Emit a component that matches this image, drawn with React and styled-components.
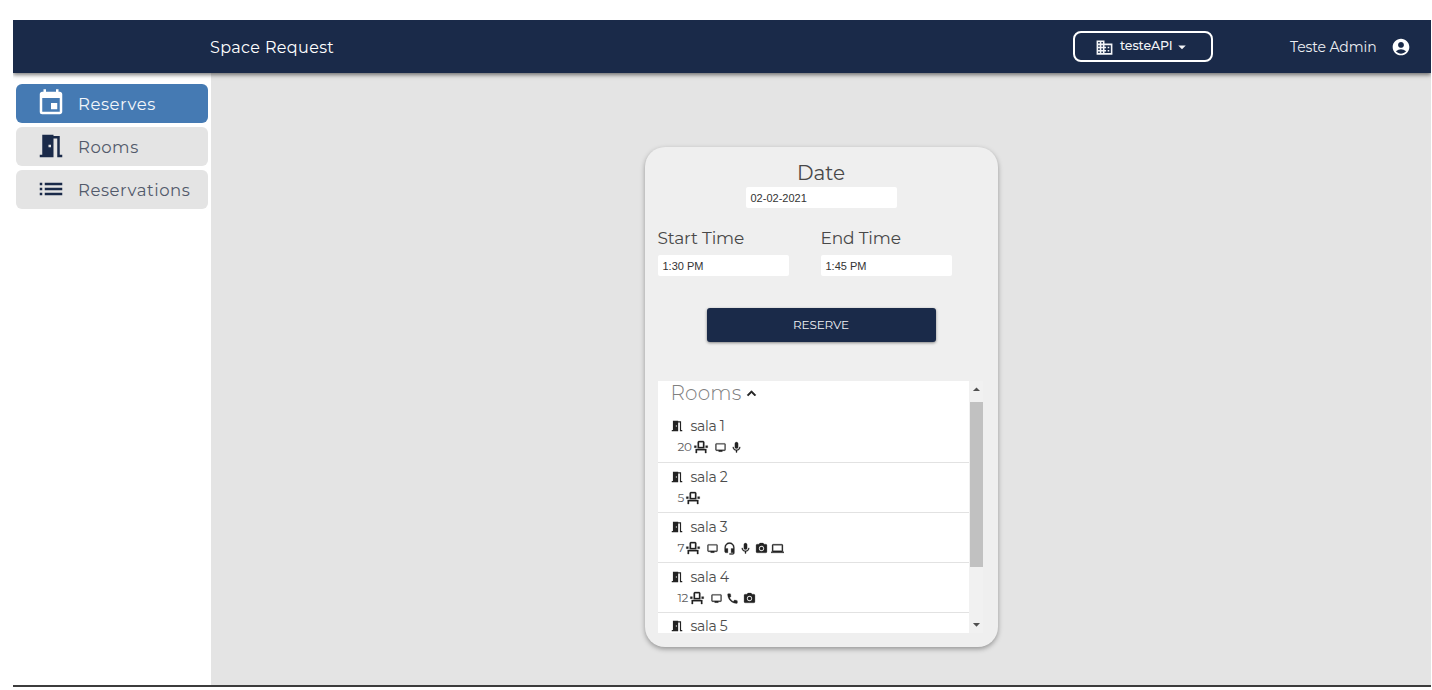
import React from "react";
import styled, { createGlobalStyle } from "styled-components";
import {
  MdEvent, MdMeetingRoom, MdList, MdDomain, MdArrowDropDown, MdAccountCircle,
  MdKeyboardArrowUp, MdOutlineEventSeat, MdOutlineTv, MdMic, MdHeadsetMic,
  MdPhotoCamera, MdLaptop, MdPhone, MdArrowDropUp,
} from "react-icons/md";

const Global = createGlobalStyle`
  * { box-sizing: border-box; }
  body { margin: 0; background: #fff; overflow: hidden; font-family: Montserrat, Inter, "Liberation Sans", sans-serif; }
  svg { display: block; flex: none; }
`;

const Page = styled.div`
  display: flex;
  flex-direction: column;
  width: 1418px;
  height: 667px;
  margin: 20px 0 0 13px;
  border-bottom: 2px solid #3c3c3c;
`;

const Header = styled.header`
  display: flex;
  align-items: center;
  height: 53px;
  flex: none;
  padding: 0 20px 0 197px;
  background: #1a2a49;
  color: #fff;
  box-shadow: 0 2px 4px rgba(0, 0, 0, 0.5);
  clip-path: inset(0 0 -8px 0);
  z-index: 1;
`;

const Label = styled.span`
  font-size: ${(p) => p.$size}px;
  font-weight: ${(p) => p.$weight || 400};
  letter-spacing: ${(p) => p.$track || 0}px;
  line-height: ${(p) => p.$line || 1.2};
  white-space: nowrap;
`;

const Title = styled(Label)`
  padding-top: 2px;
`;

const ApiButton = styled.button`
  display: flex;
  align-items: center;
  width: 140px;
  height: 31px;
  margin: 0 77px 0 auto;
  padding: 0 0 0 20px;
  border: 2px solid #fff;
  border-radius: 8px;
  background: transparent;
  color: #f4f5f8;
  font-family: inherit;
  svg:first-child { margin: 2px 6px 0 0; }
  span { margin-bottom: 2px; }
`;

const User = styled.div`
  display: flex;
  align-items: center;
  justify-content: space-between;
  width: 121px;
  color: #eceef2;
  span { padding-top: 1px; }
  svg { color: #fff; margin-top: 1px; }
`;

const Body = styled.div`
  display: flex;
  flex: 1;
  min-height: 0;
`;

const Sidebar = styled.nav`
  display: flex;
  flex-direction: column;
  gap: 4px;
  width: 198px;
  padding: 11px 3px;
`;

const NavItem = styled.a`
  display: flex;
  align-items: center;
  gap: 12px;
  height: 39px;
  padding: 0 0 1px 20px;
  border-radius: 6px;
  background: ${(p) => (p.$active ? "#457ab3" : "#e4e4e4")};
  color: ${(p) => (p.$active ? "#fff" : "#1a2a49")};
  span { color: ${(p) => (p.$active ? "#f2f6fa" : "#525a6b")}; padding-top: 3px; }
`;

const Main = styled.main`
  display: flex;
  justify-content: center;
  flex: 1;
  padding: 74px 0 0 0;
  background: #e4e4e4;
`;

const Card = styled.section`
  display: flex;
  flex-direction: column;
  width: 353px;
  height: 500px;
  padding: 14px 13px 0;
  border-radius: 20px;
  background: #efefef;
  box-shadow: 0 2px 5px rgba(0, 0, 0, 0.35);
  color: #484848;
`;

const DateField = styled.div`
  display: flex;
  flex-direction: column;
  align-items: center;
  gap: 2px;
  width: 327px;
`;

const Input = styled.div`
  display: flex;
  align-items: center;
  width: ${(p) => p.$width}px;
  height: 21px;
  padding-left: 5px;
  border-radius: 2px;
  background: #fff;
  color: #333;
  font: 11px "Liberation Sans", Arial, sans-serif;
`;

const Times = styled.div`
  display: flex;
  gap: 32px;
  margin-top: 20px;
`;

const TimeField = styled.div`
  display: flex;
  flex-direction: column;
  gap: 7px;
`;

const ReserveButton = styled.button`
  width: 229px;
  height: 34px;
  flex: none;
  margin: 32px 0 39px 49px;
  padding: 0 0 2px;
  border: 0;
  border-radius: 3px;
  background: #1a2a49;
  color: #f0f1f4;
  font-family: inherit;
  box-shadow: 0 1px 3px rgba(0, 0, 0, 0.45);
`;

const ListBox = styled.div`
  display: flex;
  flex: none;
  width: 325px;
  height: 252px;
  overflow: hidden;
`;

const List = styled.div`
  flex: 1;
  background: #fff;
`;

const ListTitle = styled.div`
  display: flex;
  align-items: center;
  height: 31px;
  padding: 0 0 7px 13px;
  color: #808080;
  svg { color: #222; margin: 1px 0 0 1px; }
  path:last-child { stroke: currentColor; stroke-width: 1; }
`;

const Room = styled.div`
  height: ${(p) => p.$height}px;
  padding: ${(p) => (p.$last ? 5 : 6)}px 0 0 12px;
  border-bottom: ${(p) => (p.$last ? 0 : 1)}px solid #e2e2e2;
  color: #222;
`;

const RoomName = styled.div`
  display: flex;
  align-items: center;
  gap: 7px;
  height: ${(p) => (p.$last ? 15 : 16)}px;
  span { color: #4c4c4c; }
`;

const Features = styled.div`
  display: flex;
  align-items: center;
  height: 16px;
  margin: 5px 0 0 8px;
  span { color: #5c5c5c; margin-right: 1px; }
`;

const SeatIcon = styled(MdOutlineEventSeat)`
  path:last-child { stroke: currentColor; stroke-width: 0.5; }
`;

const Amenities = styled.div`
  display: flex;
  align-items: center;
  gap: 3.3px;
  margin-left: 5px;
`;

const IconSlot = styled.i`
  display: flex;
  align-items: center;
  justify-content: center;
  width: 13px;
  height: 13px;
  path:last-child { stroke: currentColor; stroke-width: 0.5; }
`;

const Scrollbar = styled.div`
  display: flex;
  flex-direction: column;
  align-items: center;
  width: 14px;
  padding-left: 1px;
  background: #f1f1f1;
  color: #505050;
`;

const ScrollThumb = styled.div`
  width: 13px;
  height: 165px;
  margin: 4px 0 auto;
  background: #c1c1c1;
`;

const nav = [
  { label: "Reserves", icon: MdEvent, active: true, track: 0.55 },
  { label: "Rooms", icon: MdMeetingRoom, track: 0.5 },
  { label: "Reservations", icon: MdList, track: 0.55 },
];

const tv = { icon: MdOutlineTv, size: 11 };
const mic = { icon: MdMic, size: 13 };
const headset = { icon: MdHeadsetMic, size: 13 };
const camera = { icon: MdPhotoCamera, size: 13 };
const laptop = { icon: MdLaptop, size: 13 };
const phone = { icon: MdPhone, size: 13 };

const rooms = [
  { name: "sala 1", height: 51, seats: 20, items: [tv, mic] },
  { name: "sala 2", height: 50, seats: 5, items: [] },
  { name: "sala 3", height: 50, seats: 7, items: [tv, headset, mic, camera, laptop] },
  { name: "sala 4", height: 50, seats: 12, items: [tv, phone, camera] },
  { name: "sala 5", height: 20, last: true },
];

export default function App() {
  return (
    <>
      <Global />
      <Page>
        <Header>
          <Title $size={16} $track={0.35}>Space Request</Title>
          <ApiButton>
            <MdDomain size={19} />
            <Label $size={12.5} $weight={500} $track={-0.1}>testeAPI</Label>
            <MdArrowDropDown size={18} />
          </ApiButton>
          <User>
            <Label $size={14} $track={-0.1}>Teste Admin</Label>
            <MdAccountCircle size={20} />
          </User>
        </Header>
        <Body>
          <Sidebar>
            {nav.map(({ label, icon: Icon, active, track }) => (
              <NavItem key={label} $active={active}>
                <Icon size={30} />
                <Label $size={16.5} $track={track}>{label}</Label>
              </NavItem>
            ))}
          </Sidebar>
          <Main>
            <Card>
              <DateField>
                <Label $size={20}>Date</Label>
                <Input $width={151}>02-02-2021</Input>
              </DateField>
              <Times>
                <TimeField>
                  <Label $size={17} $line="20px" $track={-0.15}>Start Time</Label>
                  <Input $width={131}>1:30 PM</Input>
                </TimeField>
                <TimeField>
                  <Label $size={17} $line="20px" $track={-0.15}>End Time</Label>
                  <Input $width={131}>1:45 PM</Input>
                </TimeField>
              </Times>
              <ReserveButton>
                <Label $size={12} $track={-0.15}>RESERVE</Label>
              </ReserveButton>
              <ListBox>
                <List>
                  <ListTitle>
                    <Label $size={20} $weight={300} $track={0.2}>Rooms</Label>
                    <MdKeyboardArrowUp size={17} />
                  </ListTitle>
                  {rooms.map((room) => (
                    <Room key={room.name} $height={room.height} $last={room.last}>
                      <RoomName $last={room.last}>
                        <MdMeetingRoom size={14} />
                        <Label $size={14} $line="12px" $track={-0.3}>{room.name}</Label>
                      </RoomName>
                      {room.items && (
                        <Features>
                          <Label $size={12} $track={-0.3}>{room.seats}</Label>
                          <SeatIcon size={16} />
                          <Amenities>
                            {room.items.map(({ icon: Icon, size }, n) => (
                              <IconSlot key={n}><Icon size={size} /></IconSlot>
                            ))}
                          </Amenities>
                        </Features>
                      )}
                    </Room>
                  ))}
                </List>
                <Scrollbar>
                  <MdArrowDropUp size={17} />
                  <ScrollThumb />
                  <MdArrowDropDown size={17} />
                </Scrollbar>
              </ListBox>
            </Card>
          </Main>
        </Body>
      </Page>
    </>
  );
}
